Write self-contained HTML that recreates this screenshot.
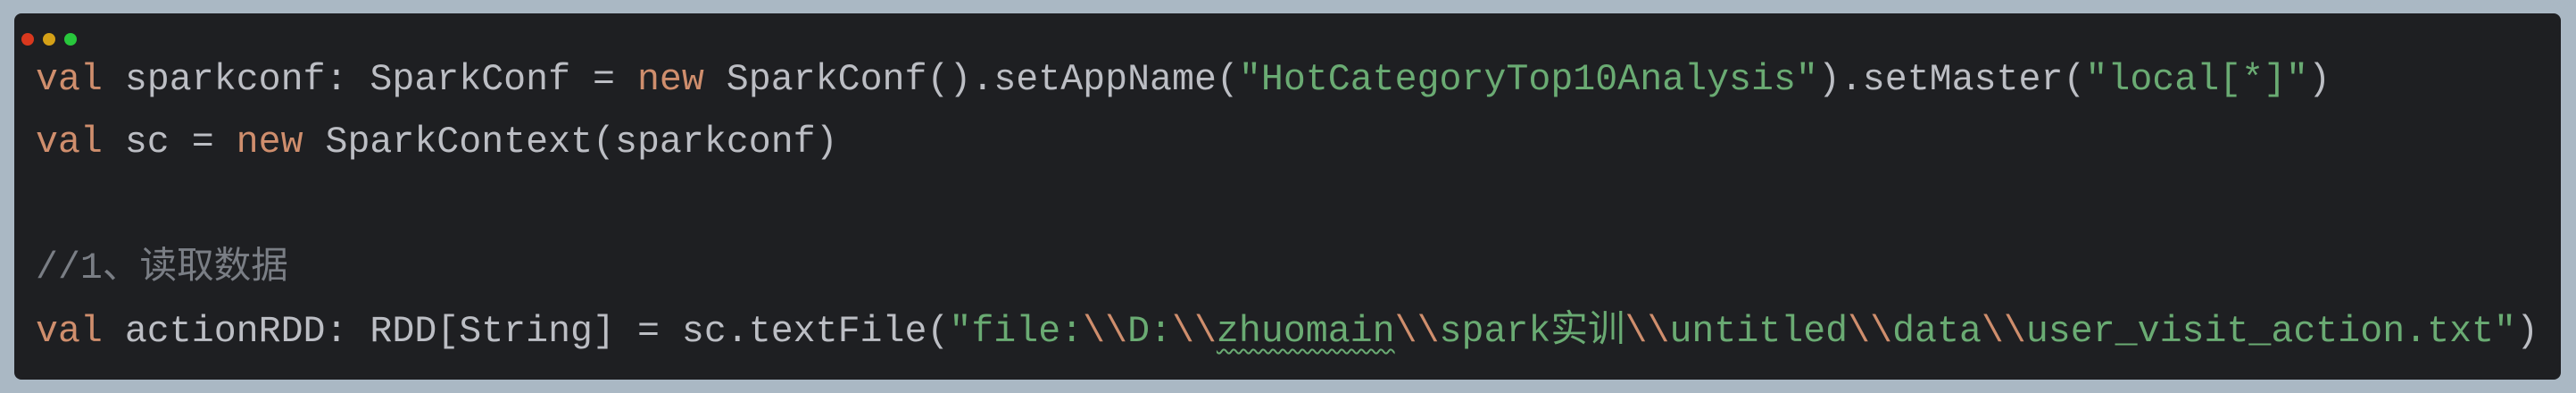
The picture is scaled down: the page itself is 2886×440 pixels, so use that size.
<!DOCTYPE html>
<html><head><meta charset="utf-8"><style>
html,body{margin:0;padding:0;width:2886px;height:440px;background:#aab8c4;overflow:hidden}
.card{position:absolute;left:16px;top:15px;width:2853px;height:410px;background:#1e1f22;border-radius:8px}
.dot{position:absolute;top:22px;width:14px;height:14px;border-radius:50%}
.l{position:absolute;left:24px;height:70px;line-height:70px;white-space:pre;font-family:"Liberation Mono","Noto Sans CJK SC",monospace;font-size:41.6px;color:#bcbec4}
.k{color:#cf8e6d}.s{color:#6aab73}.c{color:#7a7e85}.e{color:#cf8e6d}
.w{text-decoration:underline wavy #6aab73;text-decoration-thickness:2px;text-underline-offset:8px}
</style></head><body>
<div class="card">
<div class="dot" style="left:8px;background:#d9381e"></div>
<div class="dot" style="left:32px;background:#d4a017"></div>
<div class="dot" style="left:56px;background:#28c73c"></div>
<div class="l" style="top:40px"><span class="k">val</span> sparkconf: SparkConf = <span class="k">new</span> SparkConf().setAppName(<span class="s">"HotCategoryTop10Analysis"</span>).setMaster(<span class="s">"local[*]"</span>)</div>
<div class="l" style="top:110px"><span class="k">val</span> sc = <span class="k">new</span> SparkContext(sparkconf)</div>
<div class="l c" style="top:251px">//1、读取数据</div>
<div class="l" style="top:322px"><span class="k">val</span> actionRDD: RDD[String] = sc.textFile(<span class="s">"file:<span class="e">\\</span>D:<span class="e">\\</span><span class="w">zhuomain</span><span class="e">\\</span>spark实训<span class="e">\\</span>untitled<span class="e">\\</span>data<span class="e">\\</span>user_visit_action.txt"</span>)</div>
</div>
</body></html>
